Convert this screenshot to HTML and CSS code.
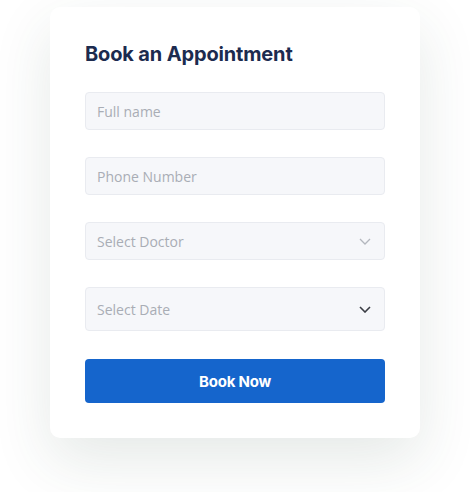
FILE: index.html
```html
<!DOCTYPE html>
<html>
<head>
<meta charset="utf-8">
<link rel="stylesheet" href="styles.css">
</head>
<body>
<div class="page">
  <form class="card">
    <h1 class="title">Book an Appointment</h1>
    <input class="field" type="text" placeholder="Full name">
    <input class="field" type="text" placeholder="Phone Number">
    <div class="field select">
      <span class="ph">Select Doctor</span>
      <svg class="chev light" width="12" height="7" viewBox="0 0 12 7"><path d="M1 1l5 5 5-5" fill="none" stroke="currentColor" stroke-width="1.3"/></svg>
    </div>
    <div class="field select tall">
      <span class="ph">Select Date</span>
      <svg class="chev dark" width="12" height="7" viewBox="0 0 12 7"><path d="M1 1l5 5 5-5" fill="none" stroke="currentColor" stroke-width="1.6"/></svg>
    </div>
    <button class="btn" type="button">Book Now</button>
  </form>
</div>
</body>
</html>
```
FILE: styles.css
```css
* { box-sizing: border-box; }
html, body { margin: 0; padding: 0; background: #ffffff; }
.page { padding: 7px 50px 54px 50px; }
.card {
  width: 370px;
  height: 431px;
  background: #ffffff;
  border-radius: 10px;
  padding: 35px;
  box-shadow: 0 22px 60px rgba(40, 70, 60, 0.12);
  display: flex;
  flex-direction: column;
}
.title {
  margin: 0 0 26px 0;
  font-family: Inter, "Liberation Sans", sans-serif;
  font-weight: 700;
  font-size: 20px;
  line-height: 24px;
  letter-spacing: -0.15px;
  color: #1c2b4f;
}
.field {
  display: block;
  width: 300px;
  height: 38px;
  margin: 0 0 27px 0;
  padding: 0 11px;
  background: #f6f7fa;
  border: 1px solid #e9ebf0;
  border-radius: 4px;
  font-family: "Open Sans", sans-serif;
  font-size: 14px;
  color: #333;
  outline: none;
}
.field::placeholder { color: #a9adb5; }
.select {
  display: flex;
  align-items: center;
  justify-content: space-between;
  padding-right: 13px;
}
.select.tall { height: 44px; margin-bottom: 28px; }
.ph { color: #a9adb5; }
.chev { display: block; }
.chev.light { color: #b3b7be; }
.chev.dark { color: #3a3d44; }
.btn {
  width: 300px;
  height: 44px;
  border: 0;
  border-radius: 4px;
  background: #1565cc;
  color: #ffffff;
  font-family: Inter, "Liberation Sans", sans-serif;
  font-weight: 700;
  font-size: 15px;
  letter-spacing: -0.2px;
  padding: 0;
}
```
